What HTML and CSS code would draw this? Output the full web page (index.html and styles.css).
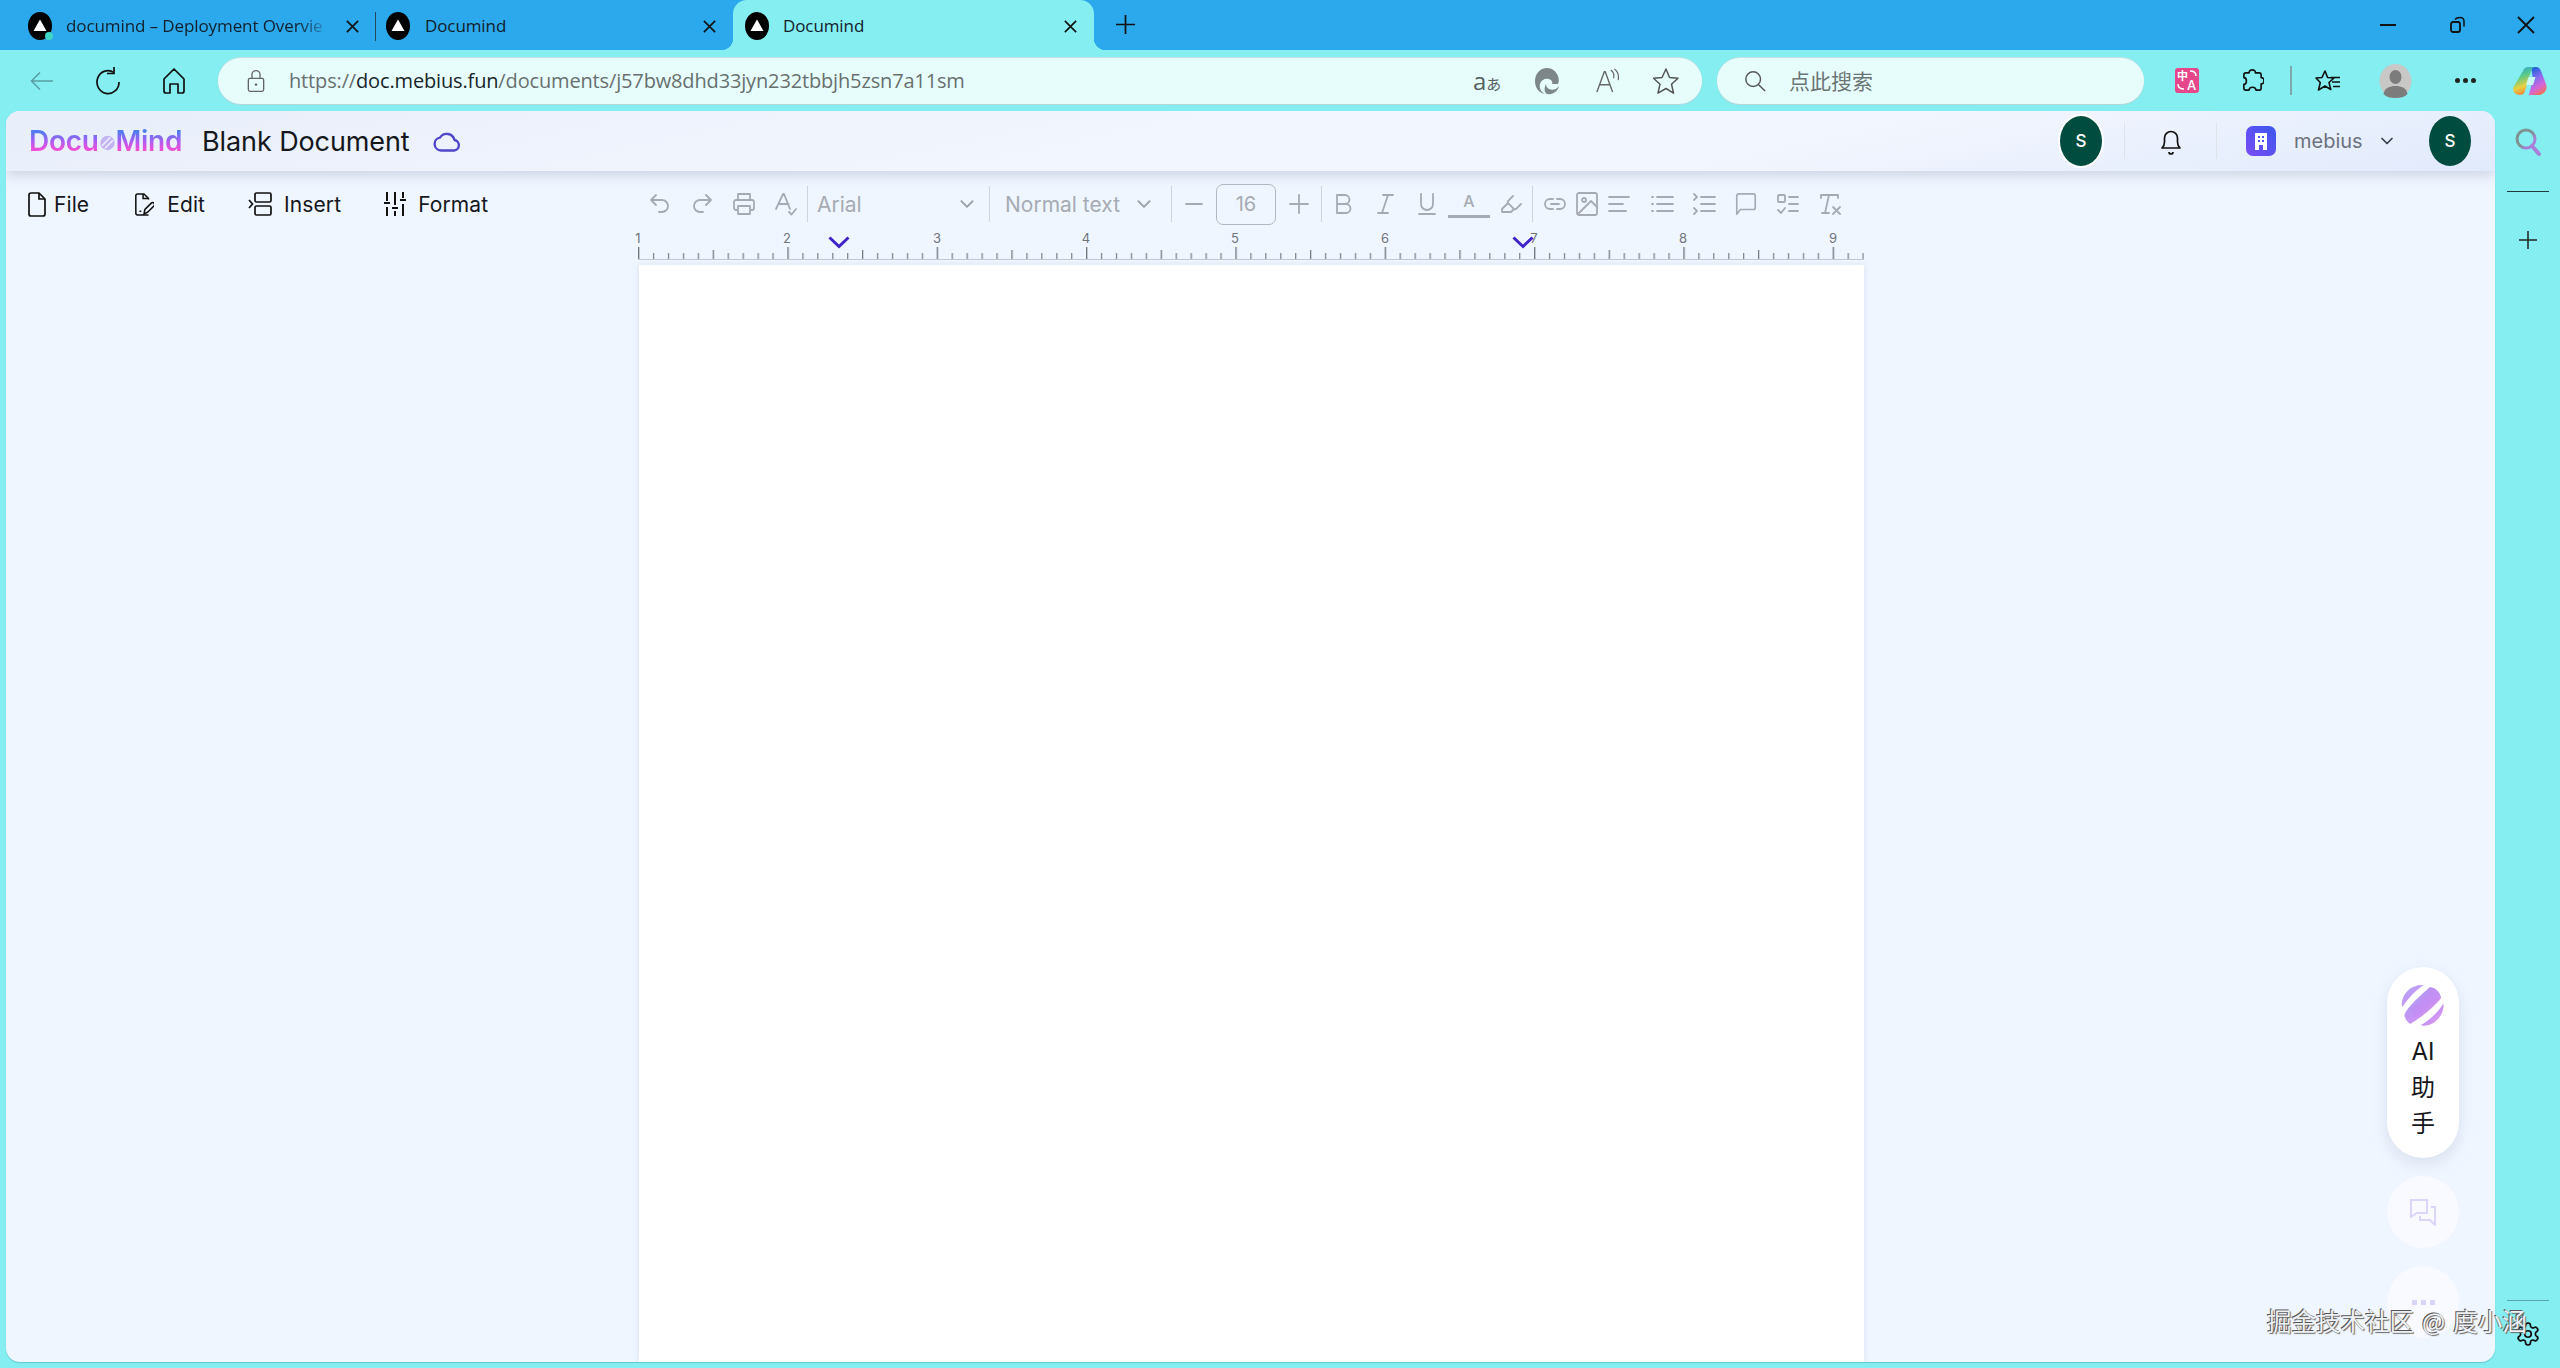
FILE: index.html
```html
<!DOCTYPE html>
<html lang="en">
<head>
<meta charset="utf-8">
<title>Documind</title>
<link rel="stylesheet" href="styles.css">
</head>
<body>
<svg class="defs" width="0" height="0" aria-hidden="true">
  <defs>
    <symbol id="favicon" viewBox="0 0 24 28"><ellipse cx="12" cy="14" rx="12" ry="14" fill="#000"/><path d="M12 7.500 18.500 19H5.500z" fill="#fff"/></symbol>
    <symbol id="x" viewBox="0 0 16 16"><path d="M2 2l12 12M14 2 2 14" fill="none" stroke="#111" stroke-width="1.700"/></symbol>
    <symbol id="chev" viewBox="0 0 16 16"><path d="M3 5.500 8 10.500l5-5" fill="none" stroke="currentColor" stroke-width="1.700" stroke-linecap="round" stroke-linejoin="round"/></symbol>
    <linearGradient id="orb" x1="0" y1="0" x2="1" y2="1"><stop offset="0" stop-color="#8c8ff2"/><stop offset=".55" stop-color="#bd80f2"/><stop offset="1" stop-color="#f092e8"/></linearGradient>
    <symbol id="orbmark" viewBox="20 22 135 135">
      <path d="M22 88C24 50 55 25 90 28 70 40 40 70 25 95z" fill="url(#orb)" opacity=".8"/>
      <path d="M30 120C40 95 80 60 108 35c17 0 32 15 35 33-23 32-73 67-95 80-10-8-16-18-18-28z" fill="url(#orb)" opacity=".85"/>
      <path d="M48 100C70 90 95 70 108 35c17 0 32 15 35 33-20 20-50 45-80 60z" fill="#c486f4" opacity=".35"/>
      <path d="M80 152c30-17 55-42 70-67 5 35-30 75-70 67z" fill="url(#orb)" opacity=".85"/>
    </symbol>
  </defs>
</svg>

<div class="tabstrip">
  <div class="tab">
    <span class="favwrap"><svg class="fav"><use href="#favicon"/></svg><i class="dot"></i></span>
    <span class="tabtitle fade">documind – Deployment Overvie</span>
    <svg class="tabx"><use href="#x"/></svg>
    <i class="tabsep"></i>
  </div>
  <div class="tab tab-b">
    <span class="favwrap"><svg class="fav"><use href="#favicon"/></svg></span>
    <span class="tabtitle">Documind</span>
    <svg class="tabx"><use href="#x"/></svg>
  </div>
  <div class="tab tab-active">
    <span class="favwrap"><svg class="fav"><use href="#favicon"/></svg></span>
    <span class="tabtitle">Documind</span>
    <svg class="tabx"><use href="#x"/></svg>
  </div>
  <svg class="newtab" viewBox="0 0 22 22"><path d="M11 1v20M1 11h20" stroke="#111" stroke-width="1.800" fill="none"/></svg>
  <div class="winctl">
    <svg viewBox="0 0 18 18"><path d="M1 9h16" stroke="#111" stroke-width="2"/></svg>
    <svg viewBox="0 0 18 18"><rect x="3" y="6" width="9" height="10" rx="2" fill="none" stroke="#111" stroke-width="1.800"/><path d="M7 3.500C8 2 10 1.500 12 1.500c2.500 0 4 1.500 4 4v5" fill="none" stroke="#111" stroke-width="1.500"/></svg>
    <svg viewBox="0 0 18 18"><path d="M1 1l16 16M17 1 1 17" stroke="#111" stroke-width="1.800"/></svg>
  </div>
</div>

<div class="navbar">
  <svg class="nav-back" viewBox="0 0 24 24"><path d="M23 12H1.500M10 3.500 1.500 12l8.500 8.500" fill="none" stroke="#5a9da3" stroke-width="1.500"/></svg>
  <svg class="nav-reload" viewBox="0 0 26 30"><path d="M19 6.500A11 11.500 0 1 0 24 16" fill="none" stroke="#111" stroke-width="1.700"/><path d="M19 1v6.500h-7" fill="none" stroke="#111" stroke-width="1.700"/></svg>
  <svg class="nav-home" viewBox="0 0 24 28"><path d="M2 12 12 2l10 10v12a2 2 0 0 1-2 2h-4v-9H8v9H4a2 2 0 0 1-2-2z" fill="none" stroke="#111" stroke-width="1.700" stroke-linejoin="round"/></svg>
  <div class="addr">
    <svg class="lock" viewBox="0 0 20 26"><rect x="1.500" y="10" width="17" height="14.500" rx="2" fill="none" stroke="#666" stroke-width="1.500"/><path d="M5.500 10V6a4.500 4.500 0 0 1 9 0v4" fill="none" stroke="#666" stroke-width="1.500"/><circle cx="10" cy="17" r="1.300" fill="#555"/></svg>
    <span class="url"><span class="dim">https://</span>doc.mebius.fun<span class="dim">/documents/j57bw8dhd33jyn232tbbjh5zsn7a11sm</span></span>
    <span class="aa">a<span class="aa-ja">あ</span></span>
    <svg class="edgeicon" viewBox="0 0 26 28"><path d="M13 1C6 1 1 7 1 14c0 7 4 12 10 13-4-2-6-6-5-10 1-4 5-6 9-5 3 1 4 3 3 5h6c1-2 1-5 0-8-2-5-6-8-11-8z" fill="#7d8688"/><path d="M13 27c6 1 11-3 12-8-2 3-6 5-10 3-2-1-3-3-3-5-2 4-2 8 1 10z" fill="#7d8688"/></svg>
    <svg class="readicon" viewBox="0 0 26 28"><path d="M1 26 9 4h1l8 22M4 18h11" fill="none" stroke="#666" stroke-width="1.500"/><path d="M16 2c3 2 4 5 3 9M20 1c4 3 5 7 4 12" fill="none" stroke="#666" stroke-width="1.300"/></svg>
    <svg class="staricon" viewBox="0 0 26 28"><path d="M13 2l3.500 8.500 8.500.7-6.500 6 2 9L13 21.500 5 26.200l2-9-6.500-6 8.500-.7z" fill="none" stroke="#555" stroke-width="1.500" stroke-linejoin="round"/></svg>
  </div>
  <div class="searchbox">
    <svg class="sicon" viewBox="0 0 24 24"><circle cx="10" cy="10" r="8" fill="none" stroke="#555" stroke-width="1.600"/><path d="M16 16l7 7" stroke="#555" stroke-width="1.600"/></svg>
    <span class="stext">点此搜索</span>
  </div>
  <div class="navtools">
    <svg class="ext-tr" viewBox="0 0 24 25"><rect width="24" height="25" rx="3" fill="#e6468a"/><text class="tr-zh" x="7.500" y="12">中</text><text class="tr-a" x="16.500" y="22">A</text><path d="M15 3c3 0 6 1 6 5M3 16c0 3 2 5 6 5" fill="none" stroke="#fff" stroke-width="1.500"/></svg>
    <svg class="ext-pz" viewBox="0 0 24 26"><path d="M8.500 5C8 .8 15.500 .8 15 5h4a2 2 0 0 1 2 2v3c4-.5 4 7 0 6.500V21a2 2 0 0 1-2 2h-3.500c0-4-7-4-7 0H5a2 2 0 0 1-2-2v-4c3.500 0 3.500-7 0-7V7a2 2 0 0 1 2-2z" fill="none" stroke="#111" stroke-width="1.700" stroke-linejoin="round"/></svg>
    <i class="navsep"></i>
    <svg class="ext-fv" viewBox="0 0 26 24"><path d="M10 2l2.600 6.500 6.400.5-5 4.500 1.800 7L10 17l-6.500 4 1.800-7.500L1 9l6-.5z" fill="none" stroke="#111" stroke-width="1.600" stroke-linejoin="round"/><path d="M16 8.500h9M17 13h8M18 17.500h7" stroke="#111" stroke-width="1.500"/></svg>
    <svg class="profile" viewBox="0 0 32 34"><ellipse cx="16" cy="17" rx="16" ry="17" fill="#c8c8c6"/><ellipse cx="16" cy="13" rx="6" ry="7" fill="#7c7c7c"/><path d="M4 30c1-6 6-8 12-8s11 2 12 8c-3 3-7 4-12 4s-9-1-12-4z" fill="#7c7c7c"/></svg>
    <span class="dots"><i></i><i></i><i></i></span>
    <svg class="copilot" viewBox="0 0 34 30">
      <defs>
        <linearGradient id="cpa" x1="0" y1="0" x2=".3" y2="1"><stop offset="0" stop-color="#2a9be8"/><stop offset=".4" stop-color="#55c98a"/><stop offset=".75" stop-color="#e8d040"/><stop offset="1" stop-color="#f28c3c"/></linearGradient>
        <linearGradient id="cpb" x1=".3" y1="0" x2=".7" y2="1"><stop offset="0" stop-color="#1a62d8"/><stop offset=".4" stop-color="#8a6cf0"/><stop offset=".7" stop-color="#d664d8"/><stop offset="1" stop-color="#f4724c"/></linearGradient>
      </defs>
      <path d="M18 1h5c2.500 0 4 1.500 5 4l5 13c2 6-2 11-8 11h-9l4-16z" fill="url(#cpb)"/>
      <path d="M10 5c1-3 3-4 5-4h7c-2 0-3 1-4 4l-6 20c-1 3-3 4-5 4-5 0-8-4-6.500-8z" fill="url(#cpa)"/>
      <path d="M15.500 11h7l-2.500 8h-7z" fill="#c9f7f2"/>
    </svg>
  </div>
</div>

<div class="workspace">
  <main class="app">
    <header class="apphead">
      <div class="logo"><span class="logotext">Docu</span><svg class="logoorb" viewBox="0 0 44 44"><circle cx="22" cy="22" r="21" fill="#c4b4f2"/><path d="M6 30 30 6M14 38 38 14" stroke="#eef2fd" stroke-width="4"/></svg><span class="logotext">Mind</span></div>
      <span class="doctitle">Blank Document</span>
      <svg class="cloud" viewBox="0 0 28 20"><path d="M8 18.500a6.500 6.500 0 0 1-1-12.900A8 8 0 0 1 21.500 8 5.300 5.300 0 0 1 21 18.500z" fill="none" stroke="#4f46c8" stroke-width="2.400" stroke-linejoin="round"/></svg>
      <div class="headright">
        <span class="avatar avatar-ring">S</span>
        <i class="headsep sep-a"></i>
        <svg class="bell" viewBox="0 0 22 28"><path d="M2 21c2-2 2.500-3 2.500-6V11a6.500 6.500 0 0 1 13 0v4c0 3 .5 4 2.500 6z" fill="none" stroke="#111" stroke-width="1.700" stroke-linejoin="round"/><path d="M9 25a2 2 0 0 0 4 0" fill="none" stroke="#111" stroke-width="1.700"/></svg>
        <i class="headsep sep-b"></i>
        <svg class="org" viewBox="0 0 30 30"><defs><linearGradient id="orgg" x1="1" y1="0" x2="0" y2="1"><stop offset="0" stop-color="#3b58ee"/><stop offset="1" stop-color="#7a4cf5"/></linearGradient></defs><rect width="30" height="30" rx="7" fill="url(#orgg)"/><path d="M9 24V7h12v17h-4v-5h-4v5z" fill="#fff"/><path d="M12 10h2v2h-2zM16 10h2v2h-2zM12 14h2v2h-2zM16 14h2v2h-2z" fill="#4a55ee"/></svg>
        <span class="orgname">mebius</span>
        <svg class="orgchev"><use href="#chev"/></svg>
        <span class="avatar">S</span>
      </div>
    </header>

    <div class="menurow">
      <nav class="menus">
        <span class="menu m-file"><svg viewBox="0 0 20 26"><path d="M2 4a2 2 0 0 1 2-2h8l6 6v15a2 2 0 0 1-2 2H4a2 2 0 0 1-2-2z" fill="none" stroke="#111" stroke-width="1.700" stroke-linejoin="round"/><path d="M12 2v6h6" fill="none" stroke="#111" stroke-width="1.700"/></svg>File</span>
        <span class="menu m-edit"><svg viewBox="0 0 22 26"><path d="M16 8V7l-5-5H4a2 2 0 0 0-2 2v19a2 2 0 0 0 2 2h12" fill="none" stroke="#111" stroke-width="1.700" stroke-linejoin="round"/><path d="M10 2v5h6M11 24l1-5 7-7a2 2 0 0 1 3 3l-7 7zM6 21h2" fill="none" stroke="#111" stroke-width="1.700"/></svg>Edit</span>
        <span class="menu m-insert"><svg viewBox="0 0 24 26"><rect x="7" y="2" width="16" height="9" rx="1.500" fill="none" stroke="#111" stroke-width="1.700"/><rect x="7" y="15" width="16" height="9" rx="1.500" fill="none" stroke="#111" stroke-width="1.700"/><path d="M1 9l3.500 4L1 17" fill="none" stroke="#111" stroke-width="1.700"/></svg>Insert</span>
        <span class="menu m-format"><svg viewBox="0 0 22 26"><path d="M3 1v9M3 16v9M11 1v13M11 20v5M19 1v6M19 13v12M0 12h6M8 17h6M16 9h6" fill="none" stroke="#111" stroke-width="2"/></svg>Format</span>
      </nav>
      <div class="fmtbar">
        <span class="tb"><svg viewBox="0 0 24 24"><path d="M8 3 3 8l5 5M3 8h11a6 6 0 0 1 0 12h-3"/></svg></span>
        <span class="tb"><svg viewBox="0 0 24 24"><path d="M16 3l5 5-5 5M21 8H10a6 6 0 0 0 0 12h3"/></svg></span>
        <span class="tb"><svg viewBox="0 0 24 24"><path d="M6 8V2h12v6M6 18H4a2 2 0 0 1-2-2v-6a2 2 0 0 1 2-2h16a2 2 0 0 1 2 2v6a2 2 0 0 1-2 2h-2M6 14h12v8H6z"/></svg></span>
        <span class="tb"><svg viewBox="0 0 24 24"><path d="M2 17 9 2h1l6 15M4.500 12h10M15 20l2.500 2.500L22 17"/></svg></span>
        <i class="tsep"></i>
        <span class="sel sel-font"><span>Arial</span><svg class="selchev"><use href="#chev"/></svg></span>
        <i class="tsep"></i>
        <span class="sel sel-style"><span>Normal text</span><svg class="selchev"><use href="#chev"/></svg></span>
        <i class="tsep"></i>
        <span class="tb tb-minus"><svg viewBox="0 0 24 24"><path d="M4 12h16"/></svg></span>
        <span class="sizebox">16</span>
        <span class="tb tb-plus"><svg viewBox="0 0 24 24"><path d="M3 12h18M12 3v18"/></svg></span>
        <i class="tsep"></i>
        <span class="tb"><svg viewBox="0 0 24 24"><path d="M6 3h8a4.500 4.500 0 0 1 0 9H6zM6 12h9a4.500 4.500 0 0 1 0 9H6z"/></svg></span>
        <span class="tb"><svg viewBox="0 0 24 24"><path d="M10 3h10M5 21h10M15 3 9 21"/></svg></span>
        <span class="tb"><svg viewBox="0 0 24 24"><path d="M6 2v10a6 6 0 0 0 12 0V2M4 22h16"/></svg></span>
        <span class="tb tb-color"><b>A</b><i class="colorbar"></i></span>
        <span class="tb"><svg viewBox="0 0 24 24"><path d="m9 11-6 6v3h9l3-3M22 12l-4.600 4.600a2 2 0 0 1-2.800 0l-5.200-5.200a2 2 0 0 1 0-2.800L14 4"/></svg></span>
        <i class="tsep"></i>
        <span class="tb tb-link"><svg viewBox="0 0 24 24"><path d="M10 17H7A5 5 0 0 1 7 7h3M14 7h3a5 5 0 0 1 0 10h-3M8 12h8"/></svg></span>
        <span class="tb tb-img"><svg viewBox="0 0 24 26"><rect x="2" y="2" width="20" height="22" rx="2"/><circle cx="9" cy="9" r="2"/><path d="M22 16 16 10 3 23"/></svg></span>
        <span class="tb tb-next"><svg viewBox="0 0 24 24"><path d="M2 5h20M2 12h14M2 19h17"/></svg></span>
        <span class="tb"><svg viewBox="0 0 24 24"><path d="M7 5h16M7 12h16M7 19h16M2 5h1M2 12h1M2 19h1"/></svg></span>
        <span class="tb"><svg viewBox="0 0 24 24"><path d="M9 5h14M9 12h14M9 19h14M2 2l3 3-3 3M2 16l3 3-3 3"/></svg></span>
        <span class="tb"><svg viewBox="0 0 24 26"><path d="M2 24V4a2 2 0 0 1 2-2h16a2 2 0 0 1 2 2v13a2 2 0 0 1-2 2H6z"/></svg></span>
        <span class="tb"><svg viewBox="0 0 24 24"><rect x="2" y="3" width="7" height="7" rx="1"/><path d="M13 5h9M13 12h9M13 19h9M2 18l3 3 4-5"/></svg></span>
        <span class="tb"><svg viewBox="0 0 24 24"><path d="M3 6V3h17v3M11 3 7 21M4 21h7M15 15l7 7M22 15l-7 7"/></svg></span>
      </div>
    </div>

    <section class="editor">
      <svg class="ruler" viewBox="0 0 1240 34">
        <defs>
          <pattern id="inch" x="7" y="0" width="149.330" height="34" patternUnits="userSpaceOnUse">
            <path d="M.7 18v12" stroke="#6f7278" stroke-width="1.300"/>
            <path d="M15.600 24v6M30.500 24v6M45.500 24v6M60.400 24v6M90.300 24v6M105.200 24v6M120.200 24v6M135.100 24v6" stroke="#7a7d84" stroke-width="1.200"/>
            <path d="M75.300 21v9" stroke="#777a80" stroke-width="1.300"/>
          </pattern>
        </defs>
        <rect x="7" y="0" width="1226" height="34" fill="url(#inch)"/>
        <path d="M7 30.500h1226" stroke="#c3c7d6" stroke-width="1"/>
        <g class="rulernums">
          <text x="7" y="14">1</text><text x="156" y="14">2</text><text x="306" y="14">3</text><text x="455" y="14">4</text><text x="604" y="14">5</text><text x="754" y="14">6</text><text x="903" y="14">7</text><text x="1052" y="14">8</text><text x="1202" y="14">9</text>
        </g>
        <path d="M198.500 8.500l9.500 9 9.500-9M882.500 8.500l9.500 9 9.500-9" fill="none" stroke="#3f22c8" stroke-width="3"/>
      </svg>
      <div class="page"></div>
    </section>

    <aside class="floaters">
      <div class="aipill">
        <svg class="aiorb"><use href="#orbmark"/></svg>
        <span>AI</span><span>助</span><span>手</span>
      </div>
      <div class="fcircle"><svg viewBox="0 0 28 28"><path d="M2 2h16v13H8l-6 4zM22 9h4v18l-5-5H11v-4" fill="none" stroke="#ddd4fb" stroke-width="2"/></svg></div>
      <div class="fcircle fc-last"><span class="fdots"><i></i><i></i><i></i></span></div>
    </aside>
  </main>

  <aside class="siderail">
    <svg class="rail-search" viewBox="0 0 26 30"><defs><linearGradient id="rs" x1="0" y1="0" x2="1" y2="1"><stop offset=".5" stop-color="#7f9294"/><stop offset=".75" stop-color="#a880d8"/></linearGradient></defs><circle cx="11" cy="12" r="9" fill="none" stroke="url(#rs)" stroke-width="3"/><path d="M17 19l7 8" stroke="#a880d8" stroke-width="4" stroke-linecap="round"/></svg>
    <i class="railline"></i>
    <svg class="rail-plus" viewBox="0 0 20 20"><path d="M10 1v18M1 10h18" stroke="#222" stroke-width="1.500"/></svg>
    <i class="railline rail-low"></i>
    <svg class="rail-gear" viewBox="0 0 24 24"><path d="M12.220 2h-.44a2 2 0 0 0-2 2v.18a2 2 0 0 1-1 1.730l-.43.25a2 2 0 0 1-2 0l-.15-.08a2 2 0 0 0-2.730.73l-.22.38a2 2 0 0 0 .73 2.730l.15.1a2 2 0 0 1 1 1.720v.51a2 2 0 0 1-1 1.740l-.15.09a2 2 0 0 0-.73 2.730l.22.38a2 2 0 0 0 2.730.73l.15-.08a2 2 0 0 1 2 0l.43.25a2 2 0 0 1 1 1.730V20a2 2 0 0 0 2 2h.44a2 2 0 0 0 2-2v-.18a2 2 0 0 1 1-1.730l.43-.25a2 2 0 0 1 2 0l.15.08a2 2 0 0 0 2.730-.73l.22-.39a2 2 0 0 0-.73-2.730l-.15-.08a2 2 0 0 1-1-1.740v-.5a2 2 0 0 1 1-1.740l.15-.09a2 2 0 0 0 .73-2.730l-.22-.38a2 2 0 0 0-2.730-.73l-.15.08a2 2 0 0 1-2 0l-.43-.25a2 2 0 0 1-1-1.730V4a2 2 0 0 0-2-2z" fill="none" stroke="#111" stroke-width="1.600"/><circle cx="12" cy="12" r="3" fill="none" stroke="#111" stroke-width="1.600"/></svg>
  </aside>
</div>
<div class="watermark">掘金技术社区 @ 度小涵</div>
</body>
</html>
```

FILE: styles.css
```css
* { box-sizing: border-box; }
html, body { margin: 0; height: 100%; overflow: hidden; }
body { width: 2560px; height: 1368px; background: #84eef0; font-family: "Inter", "Noto Sans CJK SC", sans-serif; position: relative; display: flex; flex-direction: column; }
i { display: block; font-style: normal; }
svg { display: block; flex: none; }
.defs { position: absolute; }

/* Tab strip */
.tabstrip { height: 50px; background: #2ba9ec; display: flex; padding-left: 16px; flex: none; align-items: stretch; }
.tab { width: 360px; display: flex; align-items: center; padding: 0 0 0 12px; position: relative; font-family: "Open Sans", "Noto Sans", sans-serif; font-size: 17px; color: #13202b; }
.tab-b { width: 357px; padding-left: 10px; }
.tab-active { width: 361px; background: #84eef0; border-radius: 14px 14px 0 0; }
.tab-active::before, .tab-active::after { content: ""; position: absolute; bottom: 0; width: 12px; height: 12px; }
.tab-active::before { left: -12px; background: radial-gradient(circle at 0 0, transparent 12px, #84eef0 12.500px); }
.tab-active::after { right: -12px; background: radial-gradient(circle at 100% 0, transparent 12px, #84eef0 12.500px); }
.favwrap { position: relative; width: 24px; height: 28px; flex: none; margin-top: 2px; }
.fav { width: 24px; height: 28px; }
.dot { position: absolute; right: -1px; bottom: 0; width: 8px; height: 8px; border-radius: 50%; background: #3fd6c4; }
.tabtitle { margin-left: 14px; white-space: nowrap; flex: 1; letter-spacing: -.1px; }
.tab-b .tabtitle { margin-left: 15px; }
.fade { -webkit-mask-image: linear-gradient(90deg, #000 88%, transparent 100%); mask-image: linear-gradient(90deg, #000 88%, transparent 100%); margin-right: 15px; }
.tabx { width: 15px; height: 15px; margin-right: 16px; margin-top: 2px; flex: none; }
.tabsep { position: absolute; right: 0; top: 12px; width: 1px; height: 29px; background: #27445a; }
.newtab { width: 21px; height: 21px; margin: 14px 0 0 21px; }
.winctl { margin-left: auto; display: flex; align-items: center; gap: 51px; padding-right: 25px; }
.winctl svg { width: 18px; height: 18px; }

/* Nav bar */
.navbar { height: 61px; display: flex; align-items: center; flex: none; padding-left: 30px; }
.nav-back { width: 24px; height: 24px; }
.nav-reload { width: 26px; height: 30px; margin-left: 41px; }
.nav-home { width: 24px; height: 28px; margin-left: 41px; }
.addr { margin-left: 32px; width: 1484px; height: 46px; border-radius: 23px; background: #e7fdfc; box-shadow: 0 1px 1px #b9d5d8, 0 -1px 0 #c3e2e6; display: flex; align-items: center; padding-left: 29px; font-family: "Open Sans", "Noto Sans", sans-serif; }
.lock { width: 18px; height: 24px; }
.url { margin-left: 24px; font-size: 20px; color: #18252a; white-space: nowrap; letter-spacing: -.15px; }
.dim { color: #67706f; }
.aa { margin-left: auto; font-size: 24px; color: #555f60; line-height: 1; display: flex; align-items: baseline; width: 26px; margin-right: 0; }
.aa-ja { font-family: "Noto Sans CJK JP", sans-serif; font-size: 15px; }
.edgeicon { width: 26px; height: 28px; margin-left: 35px; }
.readicon { width: 24px; height: 28px; margin-left: 36px; }
.staricon { width: 26px; height: 28px; margin-left: 33px; margin-right: 23px; }
.searchbox { margin-left: 15px; width: 427px; height: 46px; border-radius: 23px; background: #e7fdfc; box-shadow: 0 1px 1px #b9d5d8, 0 -1px 0 #c3e2e6; display: flex; align-items: center; padding-left: 27px; }
.sicon { width: 22px; height: 24px; }
.stext { margin-left: 23px; font-family: "Noto Sans CJK SC", sans-serif; font-size: 21px; color: #6b7574; padding-bottom: 2px; }
.navtools { display: flex; align-items: center; padding-left: 31px; }
.ext-tr { width: 24px; height: 25px; }
.tr-zh { font-family: "Noto Sans CJK SC", sans-serif; font-size: 11px; font-weight: 700; fill: #fff; text-anchor: middle; }
.tr-a { font-family: "Inter", sans-serif; font-size: 13px; font-weight: 500; fill: #fff; text-anchor: middle; }
.ext-pz { width: 23px; height: 25px; margin-left: 42px; }
.navsep { width: 2px; height: 29px; background: #7fa8ab; margin-left: 26px; }
.ext-fv { width: 26px; height: 24px; margin-left: 23px; }
.profile { width: 33px; height: 34px; margin-left: 38px; }
.dots { display: flex; gap: 3px; margin-left: 43px; }
.dots i { width: 5px; height: 5px; border-radius: 50%; background: #222; }
.copilot { width: 34px; height: 30px; margin-left: 37px; }

/* Workspace */
.workspace { flex: 1; display: flex; padding: 0 0 6px 6px; min-height: 0; }
.app { width: 2489px; background: #eff6ff; border-radius: 14px; overflow: hidden; display: flex; flex-direction: column; position: relative; box-shadow: 0 1px 1px #62c9cf; }
.apphead { height: 60px; flex: none; display: flex; align-items: center; padding-left: 23px; background: linear-gradient(168deg, #e8eefa 0%, #f2f6fe 45%, #f2f6fe 70%, #e1eafc 100%); box-shadow: 0 4px 12px rgba(110,120,150,.28); position: relative; z-index: 2; }
.logo { display: flex; align-items: center; width: 151px; flex: none; }
.logotext { font-size: 28px; font-weight: 600; letter-spacing: -.3px; background: linear-gradient(180deg, #4f7cf2 22%, #b05cf0 52%, #f04fd8 76%); -webkit-background-clip: text; background-clip: text; color: transparent; }
.logoorb { width: 15px; height: 20px; margin: 4px 1px 0; }
.doctitle { font-size: 27px; color: #15171c; margin-left: 22px; letter-spacing: -.1px; white-space: nowrap; }
.cloud { width: 28px; height: 20px; margin-left: 23px; margin-top: 2px; }
.headright { margin-left: auto; display: flex; align-items: center; padding-right: 24px; }
.avatar { width: 42px; height: 50px; border-radius: 50%; background: #004d40; color: #fff; font-size: 17px; font-weight: 500; display: flex; align-items: center; justify-content: center; }
.avatar-ring { box-shadow: 0 0 0 2px #fff; }
.headsep { width: 1px; height: 36px; background: #dfe3ea; }
.sep-a { margin-left: 22px; }
.bell { width: 22px; height: 28px; margin-left: 35px; }
.sep-b { margin-left: 34px; }
.org { margin-left: 29px; width: 30px; height: 30px; }
.orgname { margin-left: 18px; font-size: 20px; color: #6d7280; width: 68px; }
.orgchev { width: 16px; height: 16px; margin-left: 17px; color: #3a3f4a; }
.orgchev + .avatar { margin-left: 34px; }

/* Menu + format row */
.menurow { height: 66px; flex: none; display: flex; align-items: center; }
.menus { width: 633px; display: flex; align-items: center; padding-left: 21px; flex: none; }
.menu { display: flex; align-items: center; font-size: 21px; letter-spacing: .1px; color: #15171c; white-space: nowrap; }
.menu svg { width: 20px; height: 26px; margin-right: 7px; }
.m-edit { margin-left: 45px; }
.m-edit svg { margin-right: 13px; }
.m-insert { margin-left: 43px; }
.m-insert svg { width: 24px; margin-right: 12px; }
.m-format { margin-left: 43px; }
.m-format svg { width: 22px; margin-right: 12px; }
.fmtbar { display: flex; align-items: center; color: #a6abb3; height: 44px; }
.tb { width: 42px; height: 44px; display: flex; align-items: center; justify-content: center; flex: none; }
.tb svg { width: 24px; height: 24px; fill: none; stroke: #a6abb3; stroke-width: 1.800; stroke-linecap: round; stroke-linejoin: round; }
.tsep { width: 1px; height: 36px; background: #cfd4dc; flex: none; }
.sel { display: flex; align-items: center; font-size: 21px; color: #a6abb3; flex: none; white-space: nowrap; }
.selchev { width: 18px; height: 18px; color: #9aa0a8; }
.sel-font { width: 181px; padding-left: 9px; }
.sel-font .selchev { margin-left: auto; margin-right: 13px; }
.sel-style { width: 181px; padding-left: 15px; }
.sel-style .selchev { margin-left: 15px; }
.tb-minus { width: 44px; }
.sizebox { width: 60px; height: 41px; border: 1px solid #b3b8c0; border-radius: 7px; display: flex; align-items: center; justify-content: center; font-size: 20px; color: #a6abb3; flex: none; }
.tb-plus { width: 45px; }
.tb-color { flex-direction: column; font-size: 16px; }
.tb-color b { font-weight: 500; color: #a6abb3; line-height: 22px; }
.colorbar { width: 42px; height: 3px; background: #a6abb3; margin-top: 3px; }
.tb-link { width: 43px; }
.tb-img { width: 24px; margin-left: -1px; }
.tb-img svg { height: 26px; }
.tb-next { margin-left: -2px; width: 44px; }

/* Editor */
.editor { flex: 1; min-height: 0; display: flex; flex-direction: column; align-items: center; padding-left: 1px; }
.ruler { width: 1240px; height: 34px; flex: none; margin-top: -8px; }
.rulernums text { font-family: "Inter", sans-serif; font-size: 13px; fill: #70747c; text-anchor: middle; }
.page { width: 1225px; flex: 1; background: #fff; margin-top: 2px; box-shadow: 0 0 6px rgba(150,165,200,.25); }

/* Floating assistant */
.floaters { position: absolute; left: 2381px; top: 856px; display: flex; flex-direction: column; gap: 18px; width: 72px; }
.aipill { width: 72px; height: 191px; background: #fff; border-radius: 36px; box-shadow: 0 6px 16px rgba(130,140,170,.2); display: flex; flex-direction: column; align-items: center; padding-top: 16px; font-size: 24px; line-height: 36px; color: #15171c; font-family: "Inter", "Noto Sans CJK SC", sans-serif; }
.aiorb { width: 44px; height: 44px; margin-bottom: 7px; }
.fcircle { width: 72px; height: 72px; border-radius: 50%; background: #f8faff; display: flex; align-items: center; justify-content: center; }
.fcircle svg { width: 28px; height: 28px; }
.fdots { display: flex; gap: 4px; }
.fdots i { width: 5px; height: 5px; background: #dcd3fa; }

/* Right rail */
.siderail { flex: 1; display: flex; flex-direction: column; align-items: center; }
.rail-search { width: 26px; height: 30px; margin-top: 16px; }
.railline { width: 42px; height: 1px; background: #1d3a3d; margin-top: 34px; }
.rail-plus { width: 20px; height: 20px; margin-top: 38px; }
.rail-low { margin-top: auto; background: #5aa6ae; }
.rail-gear { width: 26px; height: 26px; margin: 20px 0 15px; }

/* Watermark */
.watermark { position: absolute; left: 2267px; top: 1303px; font-family: "Noto Sans CJK SC", sans-serif; font-size: 24.500px; word-spacing: 2.500px; line-height: 36px; color: #eef1f4; text-shadow: -1px -1px 0 #555, 1px 1px 1px #666; white-space: nowrap; }
```
